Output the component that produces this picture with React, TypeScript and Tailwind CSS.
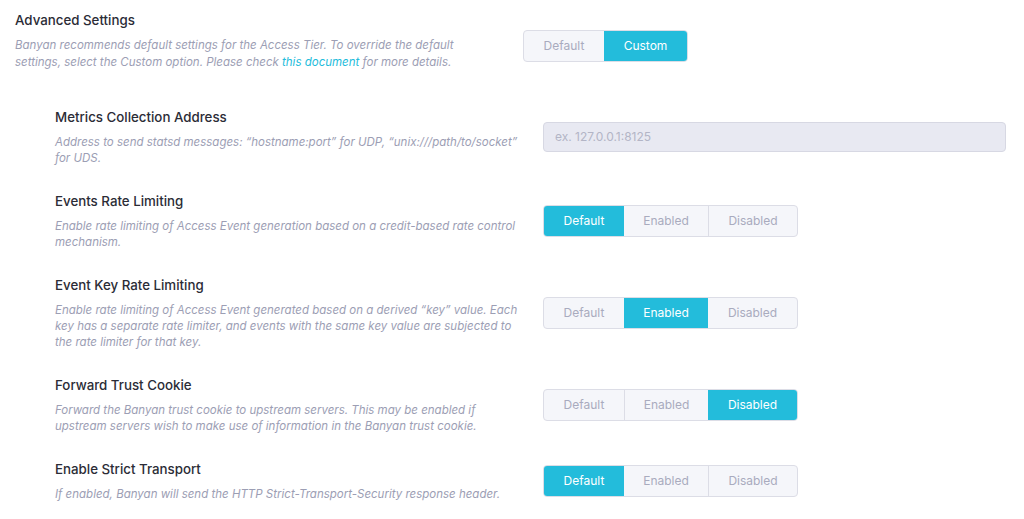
import React from "react";

type Option = { label: string; width: string };

const triOptions: Option[] = [
  { label: "Default", width: "w-[80px]" },
  { label: "Enabled", width: "w-[84px]" },
  { label: "Disabled", width: "w-[89px]" },
];

function Segmented({ options, active }: { options: Option[]; active: number }) {
  return (
    <div className="flex h-[32px] rounded-[4px] border border-[#dcdde6] bg-[#f5f6fa] overflow-hidden">
      {options.map((o, i) => {
        const isActive = i === active;
        const divider = i > 0 && !isActive && i - 1 !== active ? "border-l border-[#dcdde6]" : "";
        return (
          <button
            key={o.label}
            className={`${o.width} ${divider} flex items-center justify-center text-[12px] ${
              isActive ? "bg-[#23bcdb] text-white" : "text-[#a9abbe]"
            }`}
          >
            {o.label}
          </button>
        );
      })}
    </div>
  );
}

interface SettingRowProps {
  title: string;
  description: string;
  children: React.ReactNode;
}

function SettingRow({ title, description, children }: SettingRowProps) {
  return (
    <div className="flex items-center">
      <div className="w-[466px] shrink-0">
        <div className="text-[13.3px] font-[450] leading-[20px] text-[#2b2c36]">{title}</div>
        <p className="mt-[7px] text-[11.5px] leading-[16px] italic text-[#9c9eb4]">{description}</p>
      </div>
      <div className="ml-[22px] flex-1">{children}</div>
    </div>
  );
}

export default function App() {
  return (
    <div className="min-h-[519px] bg-white pl-[15px] pr-[18px] pt-[10px]" style={{ fontFamily: "Inter, 'Noto Sans', sans-serif" }}>
      {/* Advanced settings header */}
      <div className="flex items-start">
        <div className="w-[466px] shrink-0">
          <div className="text-[13.3px] font-[450] leading-[20px] text-[#2b2c36]">Advanced Settings</div>
          <p className="mt-[7px] text-[11.5px] leading-[17px] italic text-[#9c9eb4]">
            Banyan recommends default settings for the Access Tier. To override the default settings, select the
            Custom option. Please check <span className="text-[#23bcdb]">this document</span> for more details.
          </p>
        </div>
        <div className="ml-[42px] mt-[20px]">
          <Segmented
            options={[
              { label: "Default", width: "w-[80px]" },
              { label: "Custom", width: "w-[83px]" },
            ]}
            active={1}
          />
        </div>
      </div>

      <div className="mt-[36px] pl-[40px] flex flex-col gap-[25px]">
        <SettingRow
          title="Metrics Collection Address"
          description={'Address to send statsd messages: \u201chostname:port\u201d for UDP, \u201cunix:///path/to/socket\u201d for UDS.'}
        >
          <input
            placeholder="ex. 127.0.0.1:8125"
            className="w-full h-[30px] rounded-[4px] border border-[#d7d8e3] bg-[#e8e9f2] px-[11px] text-[12px] text-[#2f303b] placeholder:text-[#b3b5c6] outline-none"
          />
        </SettingRow>

        <SettingRow
          title="Events Rate Limiting"
          description="Enable rate limiting of Access Event generation based on a credit-based rate control mechanism."
        >
          <div className="inline-block">
            <Segmented options={triOptions} active={0} />
          </div>
        </SettingRow>

        <SettingRow
          title="Event Key Rate Limiting"
          description={'Enable rate limiting of Access Event generated based on a derived \u201ckey\u201d value. Each key has a separate rate limiter, and events with the same key value are subjected to the rate limiter for that key.'}
        >
          <div className="inline-block">
            <Segmented options={triOptions} active={1} />
          </div>
        </SettingRow>

        <SettingRow
          title="Forward Trust Cookie"
          description="Forward the Banyan trust cookie to upstream servers. This may be enabled if upstream servers wish to make use of information in the Banyan trust cookie."
        >
          <div className="inline-block">
            <Segmented options={triOptions} active={2} />
          </div>
        </SettingRow>

        <SettingRow
          title="Enable Strict Transport"
          description="If enabled, Banyan will send the HTTP Strict-Transport-Security response header."
        >
          <div className="inline-block">
            <Segmented options={triOptions} active={0} />
          </div>
        </SettingRow>
      </div>
    </div>
  );
}
